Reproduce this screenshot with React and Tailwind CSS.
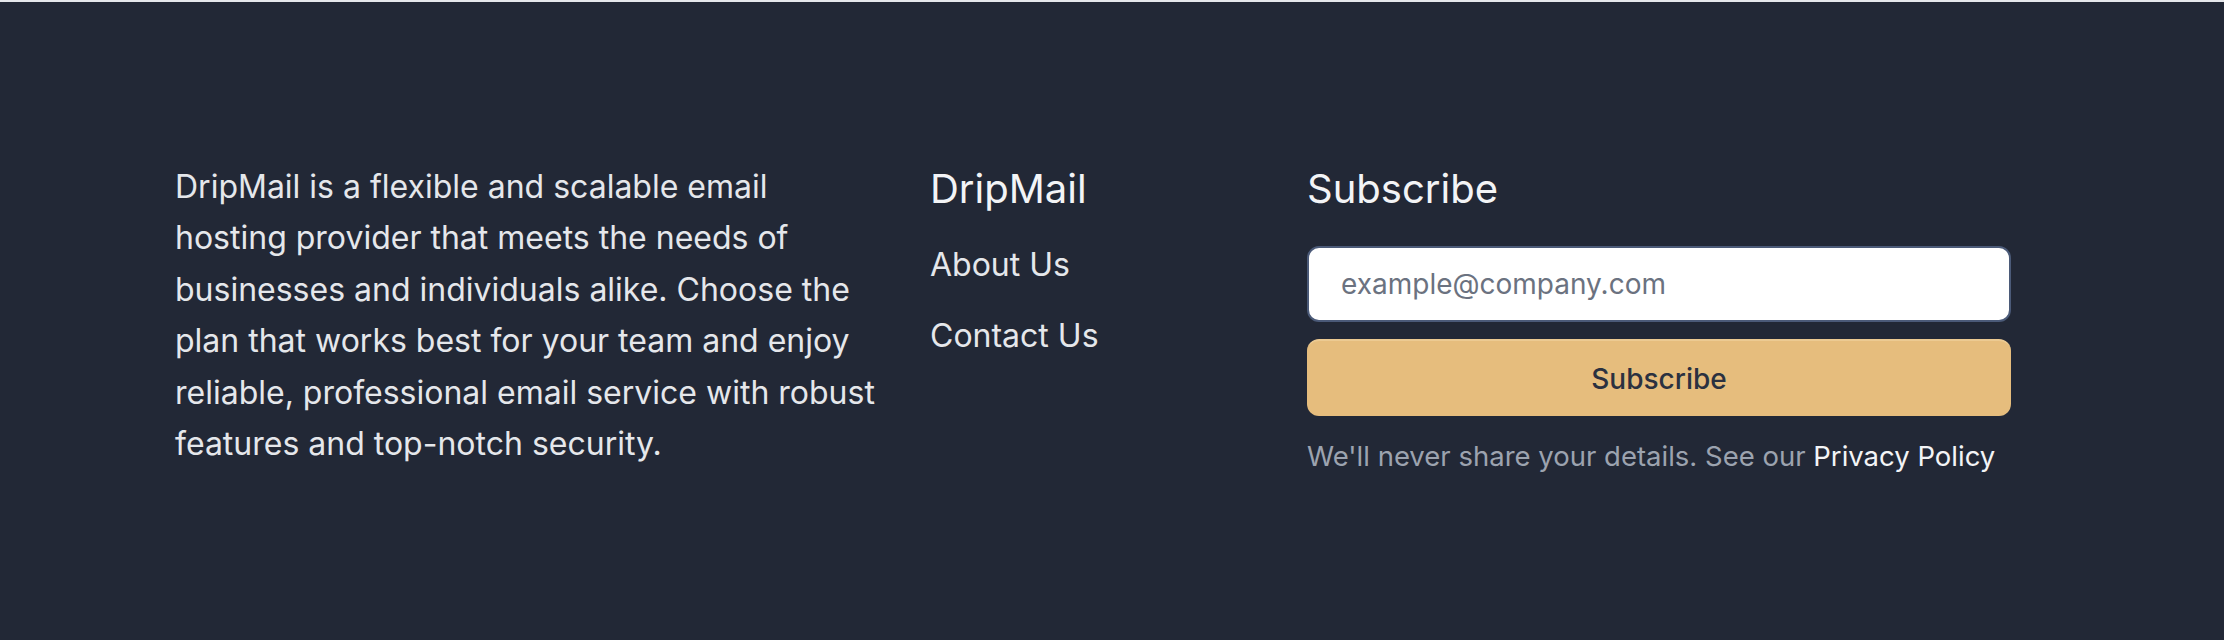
import React from "react";

export default function App() {
  return (
    <div
      className="min-h-[640px] w-full bg-[#222836] border-t-2 border-[#e5e7eb]"
      style={{ fontFamily: "Inter, 'Noto Sans', sans-serif" }}
    >
      <div className="flex gap-[50px] pl-[175px] pt-[159px]">
        <div className="w-[705px] shrink-0">
          <p className="text-[32px] leading-[51.4px] text-[#e5e7eb]">
            DripMail is a flexible and scalable email hosting provider that meets the needs of businesses and
            individuals alike. Choose the plan that works best for your team and enjoy reliable, professional email
            service with robust features and top-notch security.
          </p>
        </div>
        <div className="w-[327px] shrink-0 pt-[4px]">
          <h3 className="text-[40px] leading-[48px] font-normal text-[#f3f4f6]">DripMail</h3>
          <ul className="mt-[32px] flex flex-col gap-[31px] text-[32px] leading-[40px] text-[#e5e7eb]">
            <li>
              <a href="#">About Us</a>
            </li>
            <li>
              <a href="#">Contact Us</a>
            </li>
          </ul>
        </div>
        <div className="w-[704px] shrink-0 pt-[4px]">
          <h3 className="text-[40px] leading-[48px] font-normal text-[#f3f4f6]">Subscribe</h3>
          <form className="mt-[33px] flex flex-col gap-[17px]" onSubmit={(e) => e.preventDefault()}>
            <input
              type="email"
              placeholder="example@company.com"
              className="h-[76px] w-full rounded-[12px] border-2 border-[#4b5a78] bg-white px-[32px] text-[28px] text-[#111827] placeholder:text-[#6b7280] outline-none"
            />
            <button
              type="submit"
              className="h-[77px] w-full rounded-[12px] border-t-2 border-[#ecca92] bg-[#e6bd7d] text-[28px] font-medium text-[#2b3140]"
            >
              Subscribe
            </button>
          </form>
          <p className="mt-[22px] text-[27.5px] leading-[36px] text-[#9ca3af]">
            We'll never share your details. See our{" "}
            <a href="#" className="text-[#f3f4f6]">
              Privacy Policy
            </a>
          </p>
        </div>
      </div>
    </div>
  );
}
